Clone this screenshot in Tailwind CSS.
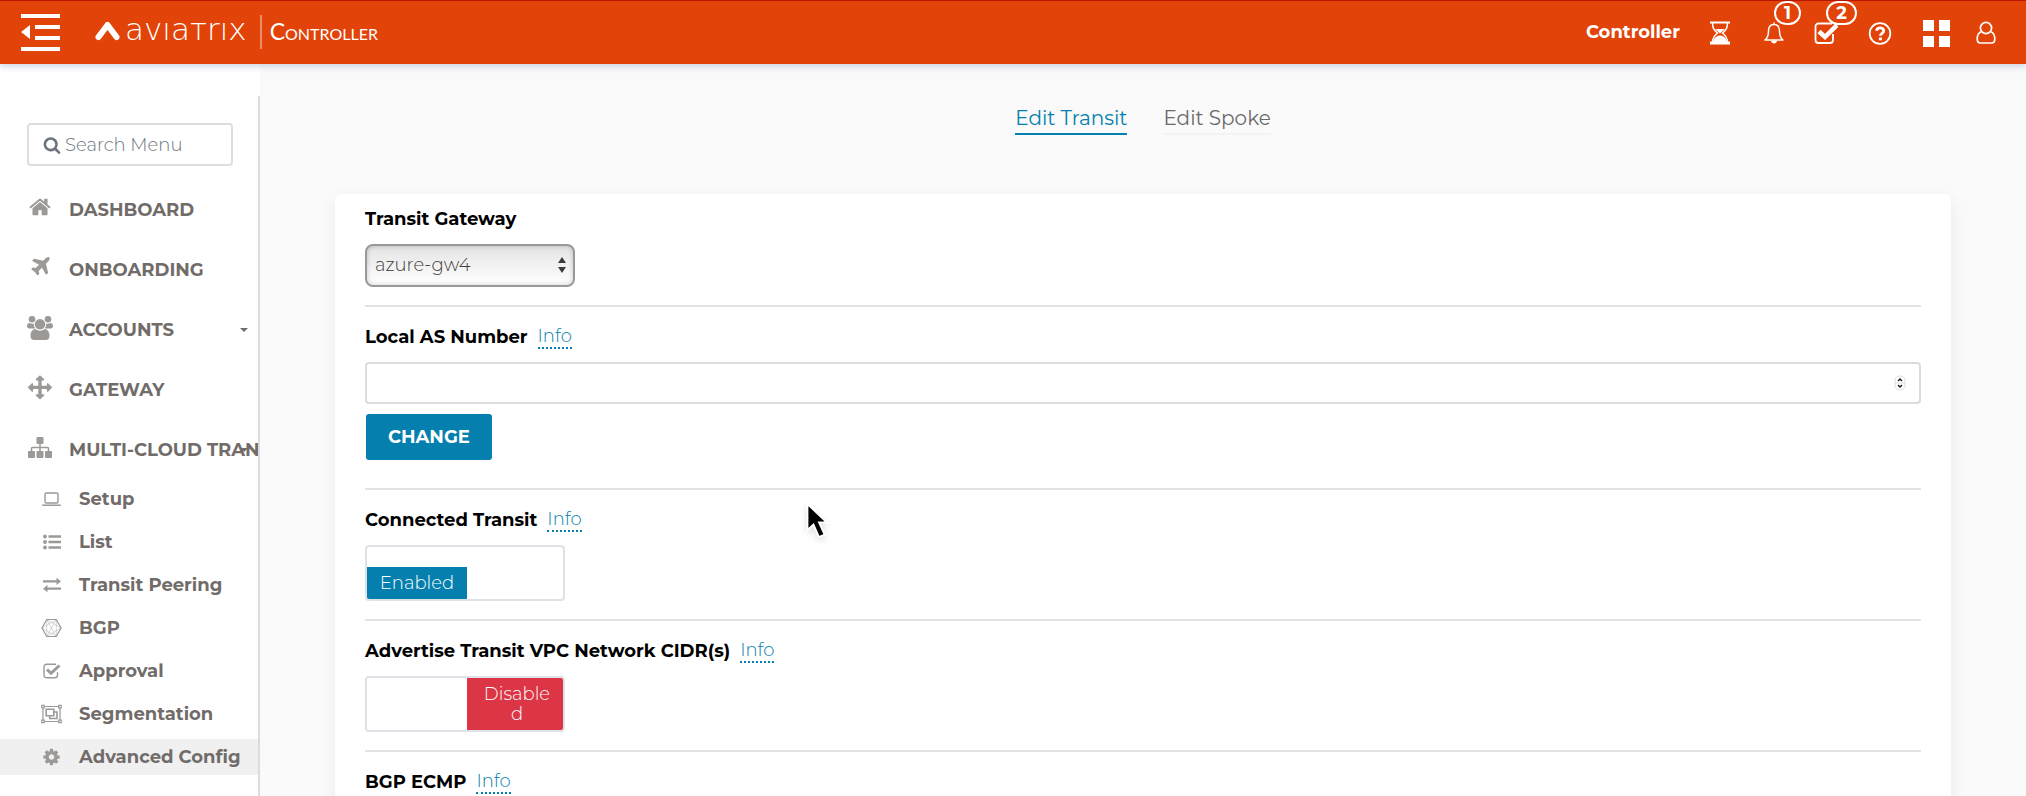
<!DOCTYPE html>
<html lang="en">
<head>
    <meta charset="UTF-8">
    <meta name="viewport" content="width=device-width, initial-scale=1">
    <title>Aviatrix Controller</title>
    <script src="https://cdn.jsdelivr.net/npm/@tailwindcss/browser@4"></script>
</head>
<body class="h-screen overflow-hidden flex flex-col bg-[#fafafa] font-['Montserrat','Inter',sans-serif] text-[18px] leading-6 text-black">

    <!-- Top bar -->
    <header class="relative z-10 h-16 shrink-0 flex items-center justify-between bg-[#e24309] border-t border-[#b81400] shadow-[0_3px_6px_rgba(180,195,210,0.6)] text-white pl-[21px] pr-[30px]">
        <div class="flex items-center">
            <button type="button" aria-label="Toggle menu" class="mr-[34px]">
                <svg class="w-10 h-[38px]" viewBox="0 0 40 38" fill="currentColor">
                    <path d="M0 0h39v4H0zM14 11h25v4H14zM14 22h25v4H14zM0 33h39v4H0zM9 11v14L0 18z"/>
                </svg>
            </button>
            <a href="#" class="flex items-center">
                <svg class="w-[26px] h-5 mr-1 mb-1" viewBox="0 0 26 20" fill="none" stroke="currentColor" stroke-width="6" stroke-linecap="round" stroke-linejoin="round">
                    <path d="M3.500 16 12.500 4l9 12"/>
                </svg>
                <span class="font-['DejaVu_Sans',sans-serif] font-extralight text-[31px] leading-8 mb-2">avıaтrıx</span>
            </a>
            <div class="w-0.5 h-[34px] bg-white/40 ml-[13px] mr-2 mb-0.5"></div>
            <span class="font-['Lato',sans-serif] text-[23px] leading-6 mb-1 [font-variant-caps:small-caps]">Controller</span>
        </div>

        <div class="flex items-center">
            <span class="font-bold mr-[30px] mb-0.5">Controller</span>
            <button type="button" aria-label="Tasks" class="mr-[34px]">
                <svg class="w-5 h-6" viewBox="0 0 20 24" fill="none" stroke="currentColor" stroke-width="1.500">
                    <path d="M0 1.500h20" stroke-width="2"/>
                    <path d="M2.500 2c0 5.500 2 7.500 5 10-3 2.500-5 4.500-5 9.500M17.500 2c0 5.500-2 7.500-5 10 3 2.500 5 4.500 5 9.500"/>
                    <path d="M5 8h10l-5 4.500z" fill="currentColor" stroke="none"/>
                    <path d="M3.500 19c1-2.500 4-4.500 6.500-4.500s5.500 2 6.500 4.500v2h-13zM0 20.500h20v3H0z" fill="currentColor" stroke="none"/>
                </svg>
            </button>
            <button type="button" aria-label="Notifications" class="relative mr-[30px]">
                <svg class="w-5 h-6" viewBox="0 0 20 24" fill="none" stroke="currentColor" stroke-width="1.500" stroke-linejoin="round">
                    <path d="M10 3.500c-4 0-5.500 3-5.500 6.500 0 4.500-1 7-3.500 9h18c-2.500-2-3.500-4.500-3.500-9 0-3.500-1.500-6.500-5.500-6.500zM10 3.500V1.500"/>
                    <path d="M7 19.500h6c0 2-1.500 3-3 3s-3-1-3-3z" fill="currentColor" stroke="none"/>
                </svg>
                <span class="absolute -top-5 left-2.5 w-[27px] h-6 flex items-center justify-center border-2 border-white rounded-full bg-[#e24309] font-bold">1</span>
            </button>
            <button type="button" aria-label="Approvals" class="relative mr-[30px]">
                <svg class="w-6 h-6" viewBox="0 0 24 24" fill="none" stroke="currentColor">
                    <path d="M18 2.500H4.500a3 3 0 0 0-3 3V19a3 3 0 0 0 3 3H16a3 3 0 0 0 3-3v-6" stroke-width="1.800"/>
                    <path d="M5 10.500l6 5.500L23 4" stroke-width="4.500"/>
                </svg>
                <span class="absolute -top-5 left-3 w-[31px] h-6 flex items-center justify-center border-2 border-white rounded-full bg-[#e24309] font-bold">2</span>
            </button>
            <button type="button" aria-label="Help" class="mr-[31px]">
                <svg class="w-6 h-6" viewBox="0 0 24 24" fill="none" stroke="currentColor">
                    <circle cx="12" cy="12.500" r="10.300" stroke-width="1.800"/>
                    <path d="M8.500 9.800c.3-2 1.600-3 3.600-3s3.600 1.200 3.600 2.900c0 2.600-3.300 2.500-3.300 5" stroke-width="2.800"/>
                    <path d="M10.900 16.500h3v2.800h-3z" fill="currentColor" stroke="none"/>
                </svg>
            </button>
            <button type="button" aria-label="Apps" class="mr-[26px]">
                <svg class="w-[27px] h-[27px] mt-0.5" viewBox="0 0 27 27" fill="currentColor">
                    <path d="M0 0h11v11H0zM16 0h11v11H16zM0 16h11v11H0zM16 16h11v11H16z"/>
                </svg>
            </button>
            <button type="button" aria-label="Account">
                <svg class="w-5 h-6" viewBox="0 0 20 24" fill="none" stroke="currentColor" stroke-width="1.700">
                    <circle cx="10" cy="7" r="5.600"/>
                    <path d="M5.500 10.500C2.500 11.500 1.200 14 1.200 18c0 2.500 1.300 4 3.300 4h11c2 0 3.300-1.500 3.300-4 0-4-1.300-6.500-4.300-7.500"/>
                </svg>
            </button>
        </div>
    </header>

    <div class="flex flex-1 min-h-0">
        <!-- Sidebar -->
        <aside class="w-[260px] shrink-0 bg-white pt-8 text-[#716c69]">
            <div class="h-full border-r-2 border-[#dcdcdc] pt-[27px] overflow-hidden">
                <label class="mx-[27px] mr-[25px] h-[43px] flex items-center gap-1 border-2 border-[#dedede] rounded px-3.5 text-[#6c757d]">
                    <svg class="w-[18px] h-[18px] shrink-0" viewBox="0 0 1792 1792" fill="currentColor"><path d="M1216 832q0-185-131.500-316.500t-316.500-131.500-316.500 131.500-131.500 316.500 131.500 316.500 316.500 131.500 316.500-131.500 131.500-316.500zm512 832q0 52-38 90t-90 38q-54 0-90-38l-343-342q-179 124-399 124-143 0-273.500-55.500t-225-150-150-225-55.500-273.500 55.500-273.500 150-225 225-150 273.500-55.500 273.500 55.500 225 150 150 225 55.500 273.500q0 220-124 399l343 343q37 37 37 90z"/></svg>
                    <input type="text" placeholder="Search Menu" aria-label="Search Menu" class="w-full min-w-0 font-light outline-none placeholder:text-[#6c757d]">
                </label>

                <nav class="pt-3.5 font-bold whitespace-nowrap">
                    <a href="#" class="relative h-[60px] flex items-center pl-[27px]">
                        <svg class="w-[26px] h-[26px] mr-4 mb-1 shrink-0 text-[#9c9997]" viewBox="0 0 1792 1792" fill="currentColor"><path transform="translate(90 20) scale(.9)" d="M1472 992v480q0 26-19 45t-45 19h-384v-384h-256v384h-384q-26 0-45-19t-19-45v-480q0-1 .5-3t.5-3l575-474 575 474q1 2 1 6zm223-69l-62 74q-8 9-21 11h-3q-13 0-21-7l-692-577-692 577q-12 8-24 7-13-2-21-11l-62-74q-8-10-7-23.500t11-21.500l719-599q32-26 76-26t76 26l244 204v-195q0-14 9-23t23-9h192q14 0 23 9t9 23v408l219 182q10 8 11 21.500t-7 23.500z"/></svg>
                        DASHBOARD
                    </a>
                    <a href="#" class="relative h-[60px] flex items-center pl-[27px]">
                        <svg class="w-[26px] h-[26px] mr-4 mb-1 shrink-0 text-[#9c9997]" viewBox="0 0 1792 1792" fill="currentColor"><path transform="translate(130 20) scale(.9)" d="M1568 160q44 52 12 148t-108 172l-161 161 160 696q5 19-12 33l-128 96q-7 6-19 6-4 0-7-1-15-3-21-16l-279-508-259 259 53 194q5 17-8 31l-96 96q-9 9-23 9h-2q-15-2-24-13l-189-252-252-189q-11-7-13-23-1-13 9-25l96-97q9-9 23-9 6 0 8 1l194 53 259-259-508-279q-14-8-17-24-2-16 9-27l128-128q14-13 30-8l665 159 160-160q76-76 172-108t148 12z"/></svg>
                        ONBOARDING
                    </a>
                    <a href="#" class="relative h-[60px] flex items-center pl-[27px]">
                        <svg class="w-[26px] h-[26px] mr-4 mb-1 shrink-0 text-[#9c9997]" viewBox="0 0 26 26" fill="currentColor">
                            <circle cx="5" cy="4.300" r="3.300"/><circle cx="21" cy="4.300" r="3.300"/>
                            <path d="M2.500 8c1.500 1 3.500 1 5 .4-.6 2 0 3.600 1 5.100H2.500C.8 13.500 0 12.600 0 11.300 0 9.500.8 8 2.500 8zM23.500 8c-1.500 1-3.500 1-5 .4.600 2 0 3.600-1 5.100h6c1.700 0 2.500-.9 2.500-2.200 0-1.800-.8-3.300-2.500-3.300z"/>
                            <circle cx="13" cy="9.300" r="5.700" stroke="#fff" stroke-width="1"/>
                            <path d="M8.300 14c2.700 2.200 6.700 2.200 9.400 0 3.300.4 4.800 3.200 4.800 7 0 2.400-1.500 4-4 4h-11c-2.500 0-4-1.600-4-4 0-3.800 1.500-6.600 4.800-7z"/>
                        </svg>
                        ACCOUNTS
                        <svg class="absolute right-2.5 top-7 w-2 h-1" viewBox="0 0 8 4" fill="currentColor"><path d="M0 0h8L4 4z"/></svg>
                    </a>
                    <a href="#" class="relative h-[60px] flex items-center pl-[27px]">
                        <svg class="w-[26px] h-[26px] mr-4 mb-1 shrink-0 text-[#9c9997]" viewBox="0 0 1792 1792" fill="currentColor"><path transform="translate(70 30) scale(.92)" d="M1792 896q0 26-19 45l-256 256q-19 19-45 19t-45-19-19-45v-128h-384v384h128q26 0 45 19t19 45-19 45l-256 256q-19 19-45 19t-45-19l-256-256q-19-19-19-45t19-45 45-19h128v-384h-384v128q0 26-19 45t-45 19-45-19l-256-256q-19-19-19-45t19-45l256-256q19-19 45-19t45 19 19 45v128h384v-384h-128q-26 0-45-19t-19-45 19-45l256-256q19-19 45-19t45 19l256 256q19 19 19 45t-19 45-45 19h-128v384h384v-128q0-26 19-45t45-19 45 19l256 256q19 19 19 45z"/></svg>
                        GATEWAY
                    </a>
                    <a href="#" class="relative h-[60px] flex items-center pl-[27px]">
                        <svg class="w-[26px] h-[26px] mr-4 mb-1 shrink-0 text-[#9c9997]" viewBox="0 0 26 26" fill="currentColor">
                            <rect x="9.500" y="2" width="7" height="7" rx="1"/><rect x="1" y="16" width="7" height="7" rx="1"/><rect x="9.500" y="16" width="7" height="7" rx="1"/><rect x="18" y="16" width="7" height="7" rx="1"/>
                            <path d="M13 8v9M4.500 17v-3.500q0-1 1-1h15q1 0 1 1V17" fill="none" stroke="currentColor" stroke-width="1.500"/>
                        </svg>
                        MULTI-CLOUD TRANSIT
                        <svg class="absolute right-2.5 top-7 w-2 h-1" viewBox="0 0 8 4" fill="currentColor"><path d="M0 0h8L4 4z"/></svg>
                    </a>

                    <div class="flex flex-col gap-[7px] pt-[1px]">
                        <a href="#" class="h-9 flex items-center pl-[41px] gap-[17px]">
                            <svg class="w-[21px] h-5 shrink-0 text-[#9c9997]" viewBox="0 0 21 20" fill="none" stroke="currentColor" stroke-width="1.400"><rect x="4" y="4" width="13" height="10" rx="1.200"/><path d="M1 15.500h19v.5q0 1-1.500 1h-16Q1 17 1 16z" fill="currentColor" stroke="none"/></svg>
                            Setup
                        </a>
                        <a href="#" class="h-9 flex items-center pl-[41px] gap-[17px]">
                            <svg class="w-[21px] h-5 shrink-0 text-[#9c9997]" viewBox="0 0 21 20" fill="currentColor"><circle cx="4" cy="4.500" r="1.900"/><circle cx="4" cy="10" r="1.900"/><circle cx="4" cy="15.500" r="1.900"/><path d="M7.500 3.300H20v2.400H7.500zM7.500 8.800H20v2.400H7.500zM7.500 14.300H20v2.400H7.500z"/></svg>
                            List
                        </a>
                        <a href="#" class="h-9 flex items-center pl-[41px] gap-[17px]">
                            <svg class="w-[21px] h-5 shrink-0 text-[#9c9997]" viewBox="0 0 21 20" fill="currentColor"><path d="M2 5.200h13.500V2.700L20 6.300 15.500 10V7.500H2zM20 12.500H6.500V10L2 13.700 6.500 17.300v-2.500H20z"/></svg>
                            Transit Peering
                        </a>
                        <a href="#" class="h-9 flex items-center pl-[41px] gap-[17px]">
                            <svg class="w-[21px] h-5 shrink-0 text-[#9c9997]" viewBox="0 0 21 20" fill="none" stroke="currentColor"><path d="M5.700 1.500h9.600L20 10l-4.700 8.500H5.700L1 10z" stroke-width="1.200"/><path d="M5.700 1.500 20 10 5.700 18.500zM15.300 1.500 1 10l14.300 8.500zM5.700 1.500l9.600 17M15.300 1.500l-9.600 17" stroke-width=".4"/></svg>
                            BGP
                        </a>
                        <a href="#" class="h-9 flex items-center pl-[41px] gap-[17px]">
                            <svg class="w-[21px] h-5 shrink-0 text-[#9c9997]" viewBox="0 0 21 20" fill="none" stroke="currentColor"><path d="M15 3.200H5.500a2.500 2.500 0 0 0-2.500 2.500v8.600a2.500 2.500 0 0 0 2.500 2.500H14a2.500 2.500 0 0 0 2.500-2.500v-3" stroke-width="1.400"/><path d="M6 8.500l4 3.800L18.500 4.500" stroke-width="3"/></svg>
                            Approval
                        </a>
                        <a href="#" class="h-9 flex items-center pl-[41px] gap-[17px]">
                            <svg class="w-[21px] h-5 shrink-0 text-[#9c9997]" viewBox="0 0 21 20" fill="none" stroke="currentColor" stroke-width="1.200"><path d="M3.500 2.500h14M3.500 17.500h14M2 4v12M19 4v12"/><path d="M.8 1.300h2.500v2.500H.8zM17.700 1.300h2.500v2.500h-2.500zM.8 16.200h2.500v2.500H.8zM17.700 16.200h2.500v2.500h-2.500z"/><path d="M5.200 5.200h7.600v6.600H5.200zM13 8h3v6.500H8.700V12" stroke-width="1.600"/></svg>
                            Segmentation
                        </a>
                        <a href="#" class="h-9 flex items-center pl-[41px] gap-[17px] bg-[#f0f0f0]">
                            <svg class="w-[21px] h-5 shrink-0 text-[#9c9997]" viewBox="0 0 1792 1792" fill="currentColor"><path transform="translate(45 45) scale(.95)" d="M1152 896q0-106-75-181t-181-75-181 75-75 181 75 181 181 75 181-75 75-181zm512-109v222q0 12-8 23t-20 13l-185 28q-19 54-39 91 35 50 107 138 10 12 10 25t-9 23q-27 37-99 108t-94 71q-12 0-26-9l-138-108q-44 23-91 38-16 136-29 186-7 28-36 28h-222q-14 0-24.500-8.500t-11.500-21.500l-28-184q-49-16-90-37l-141 107q-10 9-25 9-14 0-25-11-126-114-165-168-7-10-7-23 0-12 8-23 15-21 51-66.500t54-70.500q-27-50-41-99l-183-27q-13-2-21-12.500t-8-23.500v-222q0-12 8-23t19-13l186-28q14-46 39-92-40-57-107-138-10-12-10-24 0-10 9-23 26-36 98.500-107.500t94.500-71.500q13 0 26 10l138 107q44-23 91-38 16-136 29-186 7-28 36-28h222q14 0 24.500 8.500t11.500 21.500l28 184q49 16 90 37l142-107q9-9 24-9 13 0 25 10 129 119 165 170 7 8 7 22 0 12-8 23-15 21-51 66.500t-54 70.500q26 50 41 98l183 28q13 2 21 12.500t8 23.500z"/></svg>
                            Advanced Config
                        </a>
                    </div>
                </nav>
            </div>
        </aside>

        <!-- Content -->
        <main class="flex-1 min-w-0 flex flex-col px-[75px] pt-10">
            <nav class="flex justify-center gap-9 mb-[59px] text-[20px]">
                <a href="#" class="h-[31px] leading-7 border-b-2 border-[#0580ae] text-[#0580ae]">Edit Transit</a>
                <a href="#" class="h-[31px] leading-7 border-b-2 border-[#f3f3f3] text-[#6a6a6a]">Edit Spoke</a>
            </nav>

            <div class="flex-1 bg-white rounded-md shadow-[0_5px_16px_rgba(0,0,0,0.07)] px-[30px] pt-[13px]">
                <section class="pb-[18px] border-b-2 border-[#e3e3e3]">
                    <label for="gateway" class="block font-bold">Transit Gateway</label>
                    <div class="relative w-[210px] mt-[13px]">
                        <select id="gateway" class="appearance-none w-full h-[43px] pl-2 pb-0.5 border-2 border-[#999] rounded-lg bg-linear-to-b from-[#e4e4e4] to-white shadow-[inset_0_0_5px_rgba(0,0,0,0.2)] font-light text-[#403b38]">
                            <option>azure-gw4</option>
                        </select>
                        <svg class="absolute right-[9px] top-[13px] w-2 h-4 pointer-events-none" viewBox="0 0 8 16" fill="#403b38"><path d="M4 0l4 6H0zM0 10h8l-4 6z"/></svg>
                    </div>
                </section>

                <section class="pt-[18px] pb-7 border-b-2 border-[#e3e3e3]">
                    <div class="flex gap-2.5">
                        <label for="asn" class="font-bold">Local AS Number</label>
                        <a href="#" class="font-light leading-[22px] text-[#0580ae] border-b-2 border-dotted border-[#0580ae]">Info</a>
                    </div>
                    <div class="relative mt-[13px]">
                        <input id="asn" type="number" class="[appearance:textfield] block w-full h-[42px] px-3 border-2 border-[#dcdcdc] rounded outline-none">
                        <svg class="absolute right-[15px] top-[13px] w-3 h-4 pointer-events-none" viewBox="0 0 12 16" fill="none"><rect x="1" y="1" width="10" height="14" rx="4.500" stroke="#ddd"/><path d="M1 8h10" stroke="#ddd"/><path d="M4 6l2-2 2 2M4 10l2 2 2-2" stroke="#222" stroke-width="1.500"/></svg>
                    </div>
                    <button type="button" class="mt-2.5 ml-[1px] h-[46px] px-[22px] rounded-[3px] bg-[#0580ae] text-white font-bold">CHANGE</button>
                </section>

                <section class="pt-[18px] pb-[18px] border-b-2 border-[#e3e3e3]">
                    <div class="flex gap-2.5">
                        <label for="connected" class="font-bold">Connected Transit</label>
                        <a href="#" class="font-light leading-[22px] text-[#0580ae] border-b-2 border-dotted border-[#0580ae]">Info</a>
                    </div>
                    <label class="relative flex items-end w-[200px] h-14 mt-[13px] border-2 border-[#dee2e6] rounded overflow-hidden text-white font-light">
                        <input id="connected" type="checkbox" checked class="sr-only">
                        <span class="w-[100px] h-8 leading-8 bg-[#0580ae] text-center">Enabled</span>
                    </label>
                </section>

                <section class="pt-[18px] pb-[18px] border-b-2 border-[#e3e3e3]">
                    <div class="flex gap-2.5">
                        <label for="advertise" class="font-bold">Advertise Transit VPC Network CIDR(s)</label>
                        <a href="#" class="font-light leading-[22px] text-[#0580ae] border-b-2 border-dotted border-[#0580ae]">Info</a>
                    </div>
                    <label class="relative flex justify-end w-[200px] h-14 mt-[13px] border-2 border-[#dee2e6] rounded overflow-hidden text-white font-light">
                        <input id="advertise" type="checkbox" class="sr-only">
                        <span class="w-24 h-full pl-4 pr-3 pt-1.5 leading-5 bg-[#dc3545] text-center">Disable<br>d</span>
                    </label>
                </section>

                <section class="pt-[18px] pb-[18px]">
                    <div class="flex gap-2.5">
                        <span class="font-bold">BGP ECMP</span>
                        <a href="#" class="font-light leading-[22px] text-[#0580ae] border-b-2 border-dotted border-[#0580ae]">Info</a>
                    </div>
                </section>
            </div>
        </main>
    </div>

    <!-- Mouse pointer -->
    <svg class="absolute left-[804px] top-[500px] w-7 h-10 drop-shadow-md pointer-events-none" viewBox="0 0 28 40" fill="#000" stroke="#fff" stroke-width="1.800"><path d="M3.500 4v26l6-5.500L15 37l5.500-2.500L15 22.500h8z"/></svg>
</body>
</html>
